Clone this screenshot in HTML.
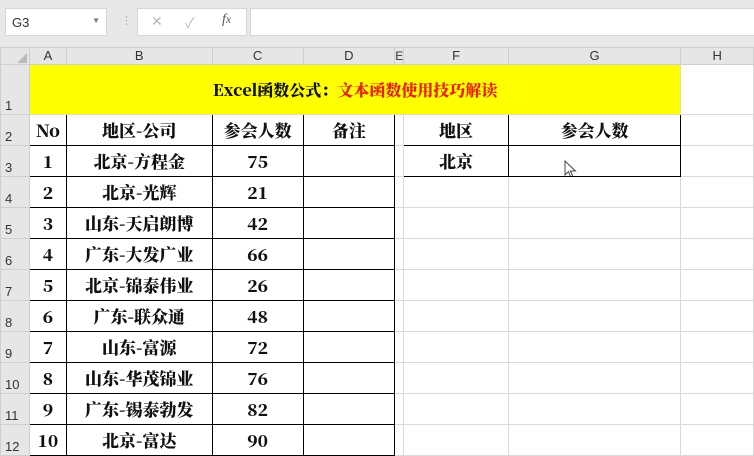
<!DOCTYPE html><html><head><meta charset="utf-8"><style>
body{margin:0;width:754px;height:433px;overflow:hidden;background:#fff;font-family:"Liberation Sans","Noto Sans CJK SC",sans-serif;position:relative}
.tb{position:absolute;left:0;top:0;width:754px;height:48px;background:#e8e8e8}
.box{position:absolute;background:#fff;border:1px solid #d6d6d6}
table{position:absolute;left:0;top:47px;border-collapse:collapse;table-layout:fixed}
td{border:1px solid #d9d9d9;padding:0;text-align:center;overflow:hidden;white-space:nowrap;font-family:"Noto Serif CJK SC","Liberation Serif",serif;font-weight:900;font-size:17px;line-height:18px;color:#111}
tr.h td{background:#e6e6e6;font-family:"Liberation Sans",sans-serif;font-weight:normal;font-size:13px;color:#333;border-color:#cfcfcf;height:16px;line-height:14px}
td.rn{background:#e6e6e6;font-family:"Liberation Sans",sans-serif;font-weight:normal;font-size:13px;color:#333;text-align:left;vertical-align:bottom;padding-left:4px;border-color:#cfcfcf;line-height:16px}
tr.r td{height:30px}
.k{border:1.5px solid #000}
</style></head><body>
<div class="tb">
<div class="box" style="left:5px;top:8px;width:100px;height:26px"><span style="position:absolute;left:6px;top:6px;font-size:13px;color:#333">G3</span><span style="position:absolute;right:6px;top:7px;font-size:8px;color:#777">▼</span></div>
<div style="position:absolute;left:121px;top:14px;color:#aaa;font-size:11px">⋮</div>
<div class="box" style="left:137px;top:8px;width:108px;height:26px;color:#bbb;font-size:14px"><span style="position:absolute;left:13px;top:4px">✕</span><span style="position:absolute;left:47px;top:4px">✓</span><span style="position:absolute;left:84px;top:3px;color:#555;font-style:italic;font-family:'Liberation Serif',serif">f<small>x</small></span></div>
<div class="box" style="left:250px;top:8px;width:510px;height:26px"></div>
</div>
<table>
<colgroup><col style="width:29px"><col style="width:37px"><col style="width:146px"><col style="width:91px"><col style="width:92px"><col style="width:8px"><col style="width:105px"><col style="width:173px"><col style="width:73px"></colgroup>
<tr class="h"><td style="position:relative"><span style="position:absolute;right:2px;bottom:1px;width:0;height:0;border-left:10px solid transparent;border-bottom:10px solid #bbb"></span></td><td>A</td><td>B</td><td>C</td><td>D</td><td style="font-size:12px">E</td><td>F</td><td>G</td><td>H</td></tr>
<tr><td class="rn" style="height:49px">1</td><td colspan="7" style="background:#ffff00;font-size:16px;border-color:#e0e0a0">Excel函数公式：<span style="color:#e8200c">文本函数使用技巧解读</span></td><td></td></tr>
<tr class="r"><td class="rn">2</td><td class="k">No</td><td class="k">地区-公司</td><td class="k">参会人数</td><td class="k">备注</td><td></td><td class="k">地区</td><td class="k">参会人数</td><td></td></tr>
<tr class="r"><td class="rn">3</td><td class="k">1</td><td class="k">北京-方程金</td><td class="k">75</td><td class="k"></td><td></td><td class="k">北京</td><td class="k" style="position:relative"><svg style="position:absolute;left:55px;top:14px" width="14" height="20" viewBox="0 0 14 20"><path d="M1 1 L1 15 L4.5 11.5 L7 18 L9 17 L6.5 11 L11.5 11 Z" fill="#fff" stroke="#444" stroke-width="1"/></svg></td><td></td></tr>
<tr class="r"><td class="rn">4</td><td class="k">2</td><td class="k">北京-光辉</td><td class="k">21</td><td class="k"></td><td></td><td></td><td></td><td></td></tr>
<tr class="r"><td class="rn">5</td><td class="k">3</td><td class="k">山东-天启朗博</td><td class="k">42</td><td class="k"></td><td></td><td></td><td></td><td></td></tr>
<tr class="r"><td class="rn">6</td><td class="k">4</td><td class="k">广东-大发广业</td><td class="k">66</td><td class="k"></td><td></td><td></td><td></td><td></td></tr>
<tr class="r"><td class="rn">7</td><td class="k">5</td><td class="k">北京-锦泰伟业</td><td class="k">26</td><td class="k"></td><td></td><td></td><td></td><td></td></tr>
<tr class="r"><td class="rn">8</td><td class="k">6</td><td class="k">广东-联众通</td><td class="k">48</td><td class="k"></td><td></td><td></td><td></td><td></td></tr>
<tr class="r"><td class="rn">9</td><td class="k">7</td><td class="k">山东-富源</td><td class="k">72</td><td class="k"></td><td></td><td></td><td></td><td></td></tr>
<tr class="r"><td class="rn">10</td><td class="k">8</td><td class="k">山东-华茂锦业</td><td class="k">76</td><td class="k"></td><td></td><td></td><td></td><td></td></tr>
<tr class="r"><td class="rn">11</td><td class="k">9</td><td class="k">广东-锡泰勃发</td><td class="k">82</td><td class="k"></td><td></td><td></td><td></td><td></td></tr>
<tr class="r"><td class="rn">12</td><td class="k">10</td><td class="k">北京-富达</td><td class="k">90</td><td class="k"></td><td></td><td></td><td></td><td></td></tr>
</table>
</body></html>
